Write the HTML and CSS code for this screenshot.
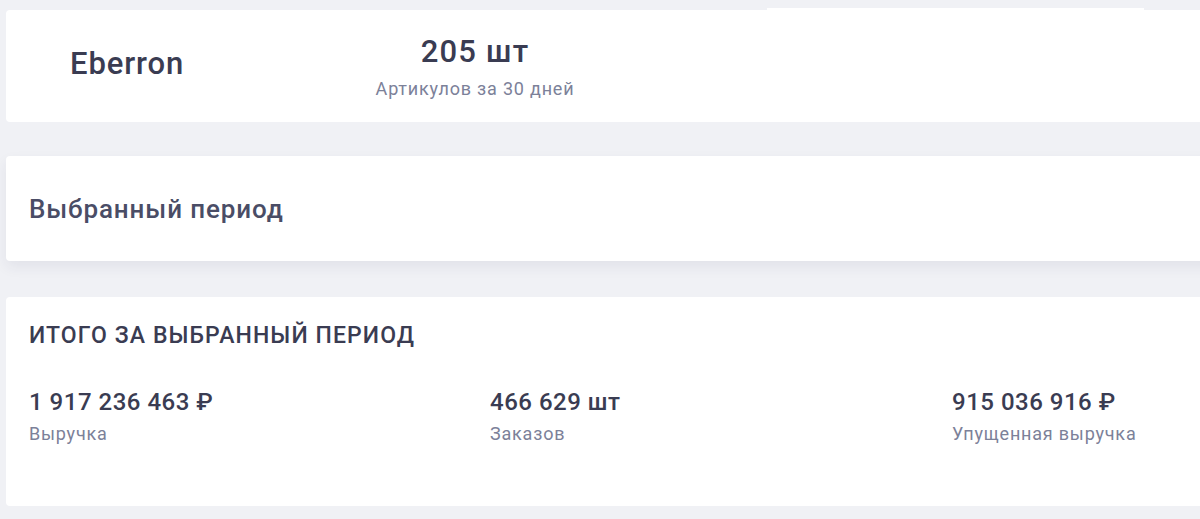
FILE: index.html
```html
<!DOCTYPE html>
<html lang="ru">
<head>
<meta charset="utf-8">
<title>Eberron</title>
<link rel="stylesheet" href="styles.css">
</head>
<body>
<div class="page">
  <section class="card card-brand">
    <div class="tab-strip"></div>
    <div class="brand-name">Eberron</div>
    <div class="brand-stat">
      <div class="stat-value-lg">205 шт</div>
      <div class="stat-label">Артикулов за 30 дней</div>
    </div>
  </section>

  <section class="card card-period">
    <h2 class="period-title">Выбранный период</h2>
  </section>

  <section class="card card-total">
    <h3 class="total-title">ИТОГО ЗА ВЫБРАННЫЙ ПЕРИОД</h3>
    <div class="totals">
      <div class="total-item">
        <div class="stat-value">1 917 236 463 ₽</div>
        <div class="stat-label">Выручка</div>
      </div>
      <div class="total-item">
        <div class="stat-value">466 629 шт</div>
        <div class="stat-label">Заказов</div>
      </div>
      <div class="total-item">
        <div class="stat-value">915 036 916 ₽</div>
        <div class="stat-label">Упущенная выручка</div>
      </div>
    </div>
  </section>
</div>
</body>
</html>
```

FILE: styles.css
```css
html, body {
  margin: 0;
  padding: 0;
  background: #f0f1f5;
  overflow: hidden;
}
body {
  font-family: Roboto, "Noto Sans", "Liberation Sans", sans-serif;
  color: #3a3c52;
}
.page {
  width: 1420px;
  padding: 10px 0 0 6px;
  display: flex;
  flex-direction: column;
}
.card {
  background: #fff;
  border-radius: 4px;
  box-sizing: border-box;
}
.card-brand {
  position: relative;
  height: 112px;
  display: flex;
  align-items: center;
  padding-left: 64px;
}
.tab-strip {
  position: absolute;
  top: -2px;
  left: 761px;
  width: 377px;
  height: 4px;
  background: #fff;
}
.brand-name {
  width: 300px;
  font-size: 31px;
  font-weight: 500;
  letter-spacing: 0.9px;
  color: #3a3c52;
  margin-top: -6px;
}
.brand-stat {
  width: 210px;
  text-align: center;
  margin-top: 2px;
}
.stat-value-lg {
  font-size: 31px;
  font-weight: 500;
  letter-spacing: 1.2px;
  line-height: 36px;
  color: #3a3c52;
}
.stat-label {
  font-size: 18px;
  letter-spacing: 0.8px;
  line-height: 22px;
  color: #7c8199;
}
.card-brand .stat-label {
  margin-top: 8px;
}
.card-period {
  margin-top: 34px;
  height: 105px;
  display: flex;
  align-items: center;
  padding-left: 23px;
  box-shadow: 0 6px 14px rgba(40, 45, 80, 0.07);
}
.period-title {
  margin: 0;
  font-size: 26px;
  font-weight: 500;
  letter-spacing: 0.9px;
  color: #4a4d66;
}
.card-total {
  margin-top: 36px;
  height: 209px;
  padding: 23px 23px 0;
}
.total-title {
  margin: 0;
  font-size: 23px;
  font-weight: 500;
  letter-spacing: 1.1px;
  line-height: 32px;
  color: #3a3c52;
}
.totals {
  display: grid;
  grid-template-columns: 461px 462px 461px;
  margin-top: 35px;
}
.stat-value {
  font-size: 24px;
  font-weight: 500;
  letter-spacing: 0.5px;
  line-height: 30px;
  color: #3a3c52;
}
.total-item .stat-label {
  margin-top: 6px;
}
```
